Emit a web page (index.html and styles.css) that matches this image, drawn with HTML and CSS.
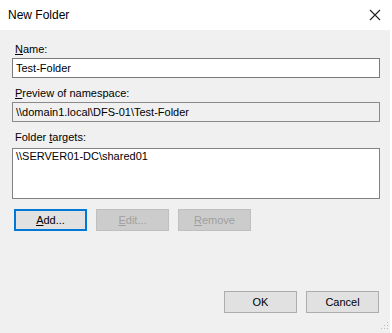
FILE: index.html
```html
<!DOCTYPE html>
<html lang="en">
<head>
  <meta charset="UTF-8">
  <title>New Folder</title>
  <link rel="stylesheet" href="styles.css">
</head>
<body>
  <div class="window">
    <!-- Title bar -->
    <div class="titlebar">
      <span class="title">New Folder</span>
      <svg class="close" width="12" height="12" viewBox="0 0 12 12">
        <path d="M1 1L11 11M11 1L1 11" stroke="#222" stroke-width="1.1" fill="none"/>
      </svg>
    </div>

    <!-- Dialog body -->
    <div class="dialog">
      <label class="field-label"><u>N</u>ame:</label>
      <div class="textbox">Test-Folder</div>

      <label class="field-label spaced"><u>P</u>review of namespace:</label>
      <div class="textbox readonly">\\domain1.local\DFS-01\Test-Folder</div>

      <label class="field-label spaced targets-label">Folder <u>t</u>argets:</label>
      <div class="listbox">
        <div class="list-item">\\SERVER01-DC\shared01</div>
      </div>

      <div class="button-row">
        <button class="btn focused"><u>A</u>dd...</button>
        <button class="btn" disabled><u>E</u>dit...</button>
        <button class="btn" disabled><u>R</u>emove</button>
      </div>

      <div class="footer">
        <button class="btn">OK</button>
        <button class="btn">Cancel</button>
      </div>

      <svg class="grip" width="8" height="8" viewBox="0 0 8 8">
        <rect x="6" y="0" width="1" height="1" fill="#bbb"/>
        <rect x="3" y="3" width="1" height="1" fill="#bbb"/>
        <rect x="6" y="3" width="1" height="1" fill="#bbb"/>
        <rect x="0" y="6" width="1" height="1" fill="#bbb"/>
        <rect x="3" y="6" width="1" height="1" fill="#bbb"/>
        <rect x="6" y="6" width="1" height="1" fill="#bbb"/>
      </svg>
    </div>
  </div>
</body>
</html>
```

FILE: styles.css
```css
body {
  margin: 0;
  background-color: #ffffff;
  font-family: "Liberation Sans", Arial, sans-serif;
  font-size: 11px;
  color: #000000;
}

.window {
  width: 390px;
  height: 333px;
  display: flex;
  flex-direction: column;
}

.titlebar {
  height: 30px;
  display: flex;
  align-items: center;
  justify-content: space-between;
  padding: 0 8px 0 8px;
  background-color: #ffffff;
}

.title {
  font-size: 12px;
  color: #000000;
}

.close {
  margin-right: 1px;
}

.dialog {
  position: relative;
  flex: 1;
  display: flex;
  flex-direction: column;
  background-color: #f0f0f0;
  padding: 12px 10px 20px 12px;
}

.field-label {
  display: block;
  height: 15px;
  line-height: 15px;
  padding-left: 3px;
  margin-bottom: 1px;
}

.field-label.spaced {
  margin-top: 8px;
}

.targets-label {
  margin-bottom: 3px;
}

.textbox {
  height: 18px;
  line-height: 18px;
  border: 1px solid #7a7a7a;
  background-color: #ffffff;
  padding: 0 3px;
  white-space: nowrap;
}

.textbox.readonly {
  background-color: #f0f0f0;
  border-color: #8a8a8a;
}

.listbox {
  height: 49px;
  border: 1px solid #828282;
  background-color: #ffffff;
  padding: 0 3px;
}

.list-item {
  line-height: 15px;
}

.button-row {
  display: flex;
  gap: 9px;
  margin-top: 10px;
  padding-left: 2px;
}

.btn {
  width: 73px;
  height: 22px;
  padding: 0;
  font-family: inherit;
  font-size: 11px;
  color: #000000;
  background-color: #e1e1e1;
  border: 1px solid #adadad;
}

.btn.focused {
  border: 2px solid #0078d7;
}

.btn:disabled {
  color: #a0a0a0;
  background-color: #cccccc;
  border-color: #bfbfbf;
}

.footer {
  display: flex;
  justify-content: flex-end;
  gap: 9px;
  margin-top: auto;
  padding-right: 1px;
}

.grip {
  position: absolute;
  right: 1px;
  bottom: 3px;
}
```
